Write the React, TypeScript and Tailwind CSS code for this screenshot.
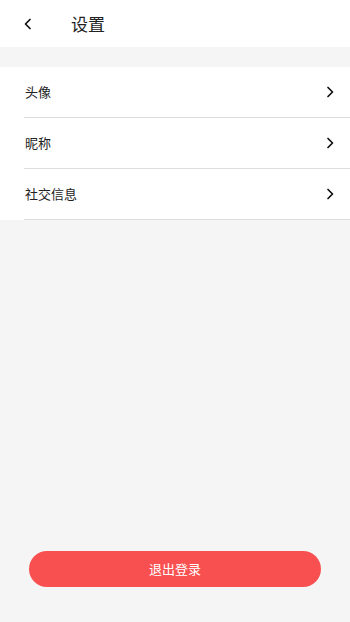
import React from "react";

const Chevron = ({ dir }: { dir: "left" | "right" }) => (
  <svg width="9" height="12" viewBox="0 0 9 12" fill="none">
    {dir === "right" ? (
      <path d="M2 1.5 L6.5 6 L2 10.5" stroke="#111" strokeWidth="1.7" strokeLinecap="round" strokeLinejoin="round" />
    ) : (
      <path d="M7 1.5 L2.5 6 L7 10.5" stroke="#111" strokeWidth="1.7" strokeLinecap="round" strokeLinejoin="round" />
    )}
  </svg>
);

const items = ["头像", "昵称", "社交信息"];

export default function App() {
  return (
    <div
      className="min-h-screen flex flex-col bg-[#f5f5f5]"
      style={{ fontFamily: '"Noto Sans CJK SC", "Noto Sans", sans-serif' }}
    >
      <div className="h-[47px] bg-white flex items-center">
        <div className="pl-[23px] w-[71px] flex items-center">
          <Chevron dir="left" />
        </div>
        <span className="text-[17px] text-[#222] leading-none">设置</span>
      </div>
      <div className="h-[20px]" />
      <div className="bg-white">
        {items.map((t) => (
          <div key={t} className="pl-[24px]">
            <div className="h-[51px] flex items-center justify-between border-b border-[#dedede] pr-[15px]">
              <span className="text-[13px] text-[#222] pl-px">{t}</span>
              <Chevron dir="right" />
            </div>
          </div>
        ))}
      </div>
      <div className="flex-1" />
      <div className="px-[29px] pb-[35px]">
        <button className="w-full h-[36px] rounded-full bg-[#f85050] text-white text-[13px] flex items-center justify-center">
          退出登录
        </button>
      </div>
    </div>
  );
}
